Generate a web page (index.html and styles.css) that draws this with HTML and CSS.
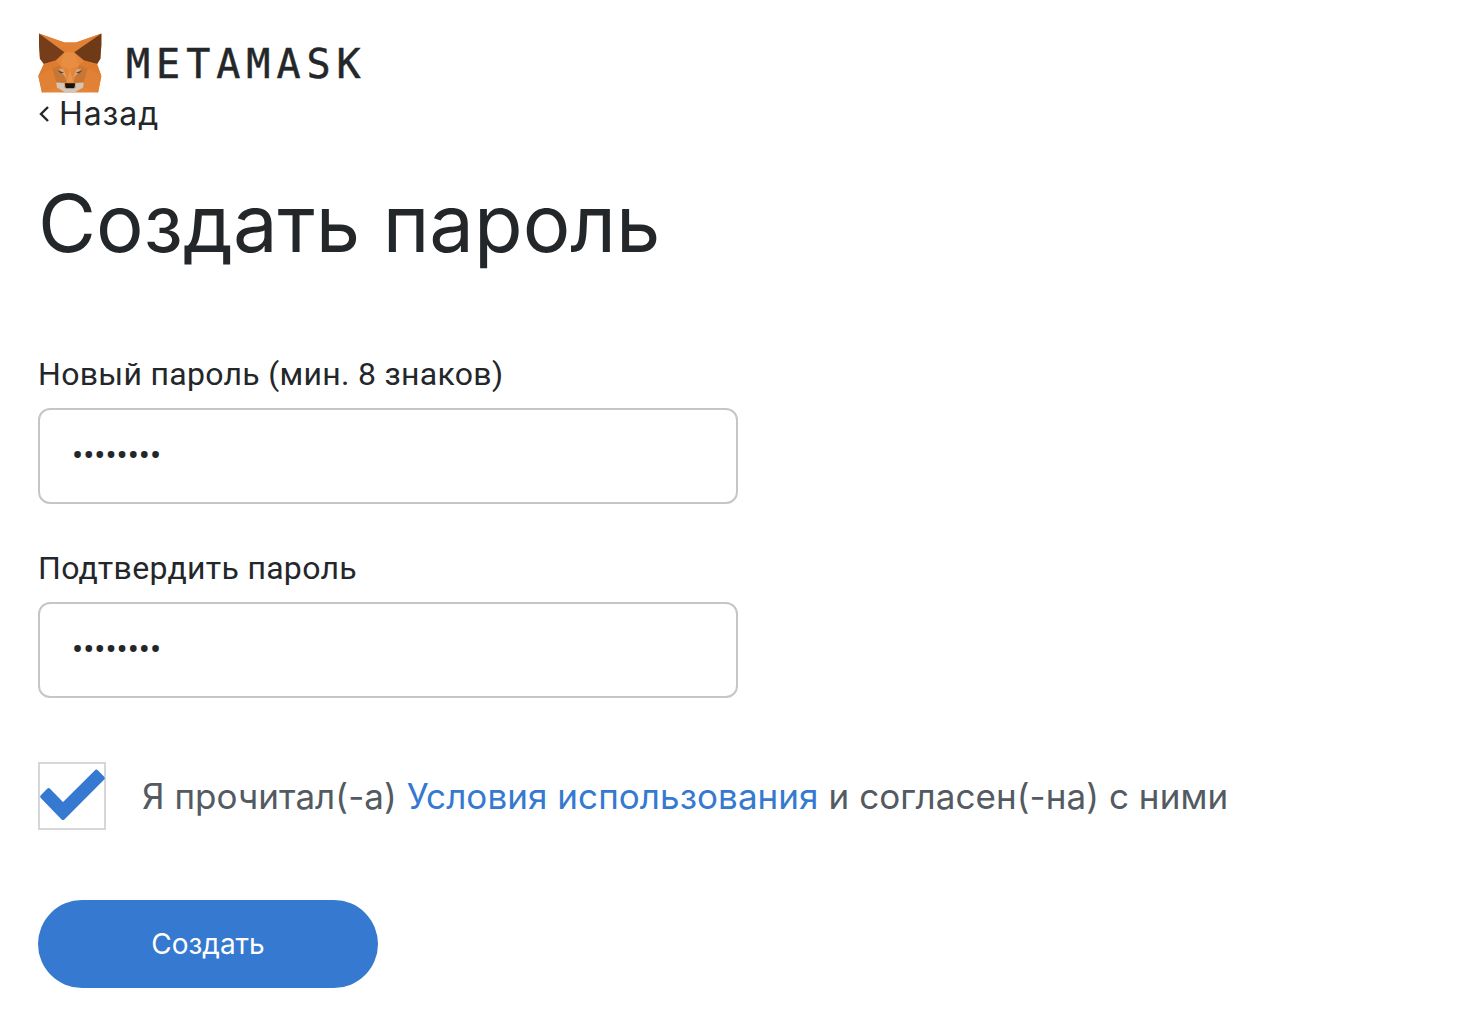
FILE: index.html
```html
<!DOCTYPE html>
<html lang="ru">
<head>
<meta charset="utf-8">
<title>MetaMask</title>
<link rel="stylesheet" href="styles.css">
</head>
<body>
<main class="page">
  <header class="brand">
    <svg class="fox" viewBox="24 14 196 182" aria-hidden="true">
      <polygon fill="#e3863a" points="27,15 105,42 140,42 218,15 218,50 215,92 205,108 218,145 208,195 136,195 108,195 36,195 25,145 42,108 30,92 27,50"/>
      <polygon fill="#e08135" points="27,15 105,42 140,42 218,15 135,72 122,110 105,72"/>
      <polygon fill="#e88e42" points="105,72 135,72 150,112 122,125 92,112"/>
      <polygon fill="#763d1a" points="27,15 105,72 78,97 42,108 30,92 27,50"/>
      <polygon fill="#6f3a18" points="218,15 135,72 165,97 205,108 215,92 218,50"/>
      <polygon fill="#dd7c2e" points="42,108 78,97 92,112 68,122 25,145"/>
      <polygon fill="#dd7c2e" points="205,108 165,97 150,112 176,122 218,145"/>
      <polygon fill="#e08135" points="25,145 68,122 80,165 82,180 36,195"/>
      <polygon fill="#e08135" points="218,145 176,122 164,165 162,180 208,195"/>
      <polygon fill="#c87632" points="68,122 92,112 112,165 80,165"/>
      <polygon fill="#c87632" points="176,122 150,112 132,165 164,165"/>
      <polygon fill="#e5a373" points="88,122 102,125 112,150 96,135"/>
      <polygon fill="#e5a373" points="156,122 142,125 132,150 148,135"/>
      <polygon fill="#e8964e" points="122,125 132,165 112,165"/>
      <polygon fill="#2e4f78" points="84,128 104,134 94,137"/>
      <polygon fill="#2e4f78" points="160,128 140,134 150,137"/>
      <polygon fill="#d2c6ba" points="80,165 106,167 104,180 140,180 138,167 164,165 162,180 136,195 108,195 82,180"/>
      <polygon fill="#17130f" points="106,167 138,167 135,182 109,182"/>
    </svg>
    <span class="wordmark">METAMASK</span>
  </header>
  <a class="back" href="#">
    <svg class="back-mark" viewBox="0 0 12 18" aria-hidden="true"><path d="M10 2 L3 9 L10 16" fill="none" stroke="#24272a" stroke-width="2.4"/></svg>
    <span>Назад</span>
  </a>
  <h1 class="title">Создать пароль</h1>
  <form class="form">
    <div class="field">
      <label class="label" for="pw">Новый пароль (мин. 8 знаков)</label>
      <input class="input" id="pw" type="password" value="12345678" readonly>
    </div>
    <div class="field">
      <label class="label" for="pw2">Подтвердить пароль</label>
      <input class="input" id="pw2" type="password" value="12345678" readonly>
    </div>
    <div class="terms">
      <span class="checkbox">
        <svg class="check" viewBox="40 764 64 64" aria-hidden="true">
          <path d="M42.2 796.6 L48.6 790.2 L63 805 L96.4 771.7 L102.8 778.1 L63 818 Z" fill="#3579d0" stroke="#3579d0" stroke-width="4" stroke-linejoin="round"/>
        </svg>
      </span>
      <p class="terms-text">Я прочитал(-а) <a class="terms-link" href="#">Условия использования</a> и согласен(-на) с ними</p>
    </div>
    <button class="submit" type="button">Создать</button>
  </form>
</main>
</body>
</html>
```

FILE: styles.css
```css
* { box-sizing: border-box; }
html, body { margin: 0; padding: 0; background: #fff; }
body { font-family: Roboto, "Liberation Sans", sans-serif; color: #24272a; }
.page { padding: 33px 38px 0; display: flex; flex-direction: column; align-items: flex-start; }
.brand { display: flex; align-items: center; gap: 24px; height: 60px; }
.fox { width: 64px; height: 60px; display: block; }
.wordmark {
  font-family: "DejaVu Sans Mono", monospace;
  font-size: 40px;
  line-height: 60px;
  letter-spacing: 6px;
  color: #24272a;
  -webkit-text-stroke: 0.5px #24272a;
  padding-top: 2px;
}
.back {
  display: flex;
  align-items: center;
  gap: 9px;
  font-family: Inter, "Open Sans", sans-serif;
  font-size: 32px;
  letter-spacing: 0.9px;
  line-height: 40px;
  color: #24272a;
  text-decoration: none;
  margin-top: 1px;
}
.back-mark { width: 12px; height: 18px; display: block; }
.title {
  font-family: Inter, "Open Sans", sans-serif;
  font-weight: 400;
  font-size: 79.5px;
  line-height: 100px;
  margin: 39px 0 0;
  color: #24272a;
}
.form { display: flex; flex-direction: column; align-items: flex-start; margin-top: 79px; }
.field { display: flex; flex-direction: column; margin-bottom: 42px; }
.label { font-size: 32px; letter-spacing: 0.3px; line-height: 44px; margin-bottom: 12px; color: #24272a; }
.input {
  width: 700px;
  height: 96px;
  border: 2px solid #c4c6c8;
  border-radius: 12px;
  padding: 0 32px 2px;
  font-family: Roboto, sans-serif;
  font-size: 33px;
  color: #24272a;
  background: #fff;
  outline: none;
}
.terms { display: flex; align-items: center; gap: 36px; margin-top: 22px; }
.checkbox {
  width: 68px;
  height: 68px;
  border: 2px solid #d6d7db;
  display: flex;
  flex: none;
}
.check { width: 64px; height: 64px; display: block; overflow: visible; }
.terms-text {
  font-family: Inter, "Open Sans", sans-serif;
  font-size: 35px;
  letter-spacing: 0.06px;
  line-height: 48px;
  color: #535a61;
  margin: 0;
}
.terms-link { color: #3579d0; text-decoration: none; }
.submit {
  width: 340px;
  height: 88px;
  margin-top: 70px;
  border: none;
  border-radius: 44px;
  background: #3579d0;
  color: #fff;
  font-family: Inter, "Open Sans", sans-serif;
  font-size: 28px;
}
```
